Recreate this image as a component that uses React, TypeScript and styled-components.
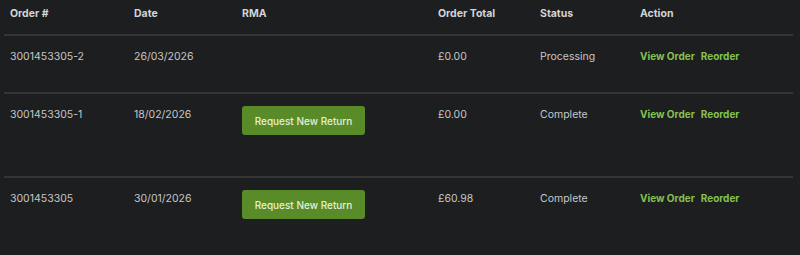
import React from "react";
import styled, { createGlobalStyle } from "styled-components";

const Global = createGlobalStyle`
  html, body { margin: 0; padding: 0; background: #1c1e20; }
  body { font-family: Inter, "Noto Sans", sans-serif; }
`;

const Table = styled.div`
  margin-left: 4px;
  width: 789px;
  color: #c6c7c8;
  font-size: 10.5px;
`;

const Row = styled.div<{ $header?: boolean }>`
  display: grid;
  grid-template-columns: 124px 108px 196px 102px 100px 1fr;
  align-items: start;
  padding: ${(p) => (p.$header ? "7px 0 0 6px" : "13px 0 0 6px")};
  height: ${(p) => (p.$header ? "27px" : "auto")};
  border-bottom: 2px solid #333537;
`;

const Head = styled.div`
  font-weight: 700;
  color: #d3d4d5;
  line-height: 14px;
`;

const Cell = styled.div<{ $tall?: boolean }>`
  line-height: 15px;
  min-height: ${(p) => (p.$tall ? "69px" : "43px")};
`;

const ReturnButton = styled.button`
  margin-top: -1px;
  width: 123px;
  height: 29px;
  border: none;
  border-radius: 3px;
  background: #5a8b29;
  color: #e4f0da;
  font-family: inherit;
  font-size: 10px;
  font-weight: 500;
  padding: 0;
`;

const Actions = styled.div`
  display: flex;
  gap: 6px;
  line-height: 15px;
`;

const Link = styled.a`
  color: #86c24f;
  font-weight: 700;
  font-size: 10px;
  text-decoration: none;
`;

const orders = [
  { id: "3001453305-2", date: "26/03/2026", rma: false, total: "£0.00", status: "Processing" },
  { id: "3001453305-1", date: "18/02/2026", rma: true, total: "£0.00", status: "Complete" },
  { id: "3001453305", date: "30/01/2026", rma: true, total: "£60.98", status: "Complete" },
];

export default function App() {
  return (
    <>
      <Global />
      <Table>
        <Row $header>
          <Head>Order #</Head>
          <Head>Date</Head>
          <Head>RMA</Head>
          <Head>Order Total</Head>
          <Head>Status</Head>
          <Head>Action</Head>
        </Row>
        {orders.map((o) => (
          <Row key={o.id}>
            <Cell $tall={o.rma}>{o.id}</Cell>
            <Cell $tall={o.rma}>{o.date}</Cell>
            <Cell $tall={o.rma}>{o.rma && <ReturnButton>Request New Return</ReturnButton>}</Cell>
            <Cell $tall={o.rma}>{o.total}</Cell>
            <Cell $tall={o.rma}>{o.status}</Cell>
            <Actions>
              <Link href="#">View Order</Link>
              <Link href="#">Reorder</Link>
            </Actions>
          </Row>
        ))}
      </Table>
    </>
  );
}
